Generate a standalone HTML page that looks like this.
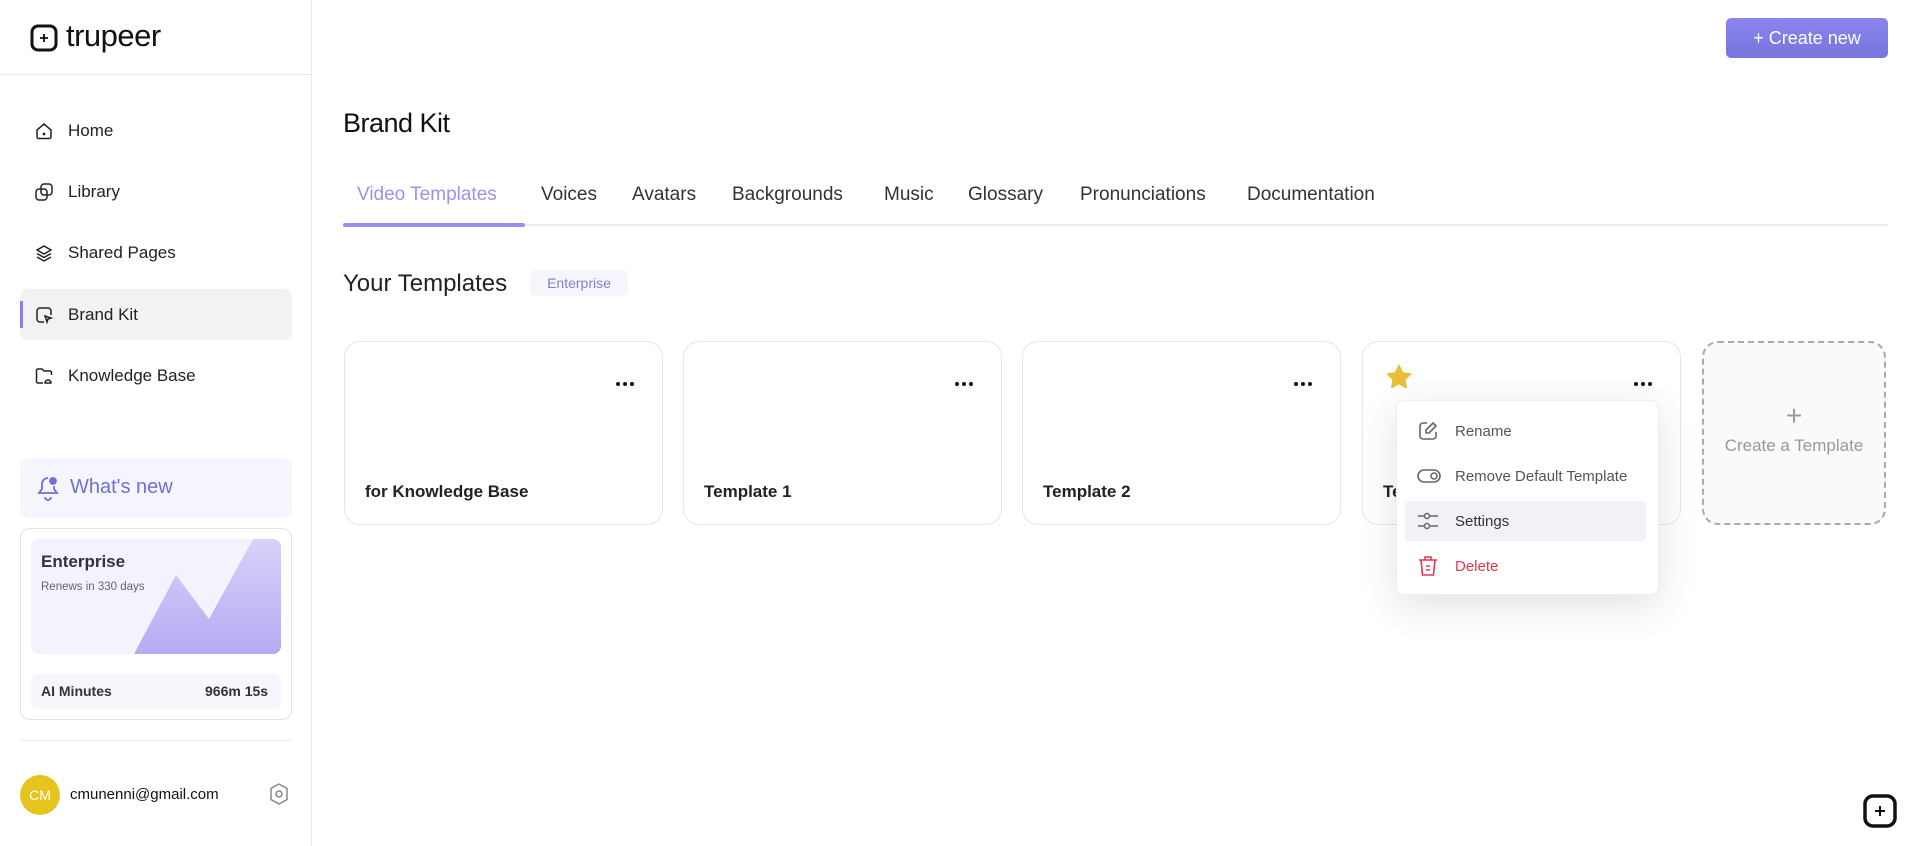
<!DOCTYPE html>
<html><head><style>
*{box-sizing:border-box;margin:0;padding:0}
body{width:1920px;height:846px;background:#fff;font-family:"Liberation Sans",sans-serif;position:relative;overflow:hidden;color:#1a1a1a}
.abs{position:absolute}
.side{left:0;top:0;width:312px;height:846px;border-right:1px solid #e8e8e8}
.nav{position:absolute;left:20px;width:272px;height:51px;display:flex;align-items:center;font-size:17px;color:#222}
.nav svg{position:absolute;left:15px}
.nav span{position:absolute;left:48px}
.tab{position:absolute;top:184px;font-size:19px;color:#333}
.card{position:absolute;top:341px;width:319px;height:184px;border:1.5px solid #e6e6e6;border-radius:16px;background:#fff}
.card .dots{position:absolute;right:28px;top:40px;width:18px;height:4px;display:flex;justify-content:space-between}
.card .dots i{width:4px;height:4px;border-radius:50%;background:#111;display:block}
.card .t{position:absolute;left:20px;top:140px;font-size:17px;font-weight:bold;color:#222}
.mi{position:absolute;left:8px;width:241px;height:40px;display:flex;align-items:center;font-size:15px;color:#555}
.mi svg{position:absolute;left:12px}
.mi span{position:absolute;left:50px}
</style></head><body>
<div class="abs side"></div>
<svg class="abs" style="left:30px;top:24px" width="28" height="28" viewBox="0 0 28 28"><rect x="2" y="2" width="24" height="24" rx="6" fill="none" stroke="#111" stroke-width="3"/><path d="M14 10v8M10 14h8" stroke="#111" stroke-width="1.8"/></svg>
<div class="abs" style="left:66px;top:18px;font-size:31px;color:#111;letter-spacing:-0.5px">trupeer</div>
<div class="abs" style="left:0;top:74px;width:312px;height:1px;background:#e5e5e5"></div>

<div class="nav" style="top:105px"><svg width="18" height="18" viewBox="0 0 18 18" fill="none" stroke="#222" stroke-width="1.5"><path d="M2 8l7-6 7 6v7a1.5 1.5 0 0 1-1.5 1.5h-11A1.5 1.5 0 0 1 2 15z"/><circle cx="9" cy="12" r=".6" fill="#222"/></svg><span>Home</span></div>
<div class="nav" style="top:166px"><svg width="18" height="18" viewBox="0 0 18 18" fill="none" stroke="#222" stroke-width="1.5"><rect x="1" y="6" width="11" height="11" rx="3"/><rect x="6" y="1" width="11" height="11" rx="3"/></svg><span>Library</span></div>
<div class="nav" style="top:227px"><svg width="18" height="18" viewBox="0 0 18 18" fill="none" stroke="#222" stroke-width="1.5"><path d="M9 2l7 4-7 4-7-4z"/><path d="M2 9.5l7 4 7-4M2 13l7 4 7-4"/></svg><span>Shared Pages</span></div>
<div class="nav" style="top:289px;background:#f2f2f2;border-radius:8px"><div class="abs" style="left:0;top:12px;width:3px;height:27px;background:#8a80ee"></div><svg width="18" height="18" viewBox="0 0 18 18" fill="none" stroke="#222" stroke-width="1.5"><path d="M16 9V5a3 3 0 0 0-3-3H5a3 3 0 0 0-3 3v8a3 3 0 0 0 3 3h4"/><path d="M10 10l6 2-3 1-1 3z"/></svg><span>Brand Kit</span></div>
<div class="nav" style="top:350px"><svg width="18" height="18" viewBox="0 0 18 18" fill="none" stroke="#222" stroke-width="1.5"><path d="M8 16H3a1.5 1.5 0 0 1-1.5-1.5v-11A1.5 1.5 0 0 1 3 2h4l2 2h6a1.5 1.5 0 0 1 1.5 1.5V8"/><path d="M10 16a3 3 0 0 1 6 0z"/></svg><span>Knowledge Base</span></div>

<div class="abs" style="left:20px;top:458px;width:272px;height:60px;background:#f5f5fe;border-radius:10px"></div>
<svg class="abs" style="left:36px;top:475px" width="24" height="26" viewBox="0 0 24 26" fill="none" stroke="#6a70d8" stroke-width="1.8"><path d="M12 3a6 6 0 0 0-6 6v5l-3 4h18l-3-4v-3"/><path d="M9 22a3 3 0 0 0 6 0"/><circle cx="17" cy="6" r="3" fill="#6a70d8"/></svg>
<div class="abs" style="left:70px;top:476px;font-size:20px;color:#6a70d8">What's new</div>

<div class="abs" style="left:20px;top:528px;width:272px;height:192px;border:1.5px solid #e2e2e2;border-radius:10px"></div>
<div class="abs" style="left:31px;top:539px;width:250px;height:115px;border-radius:8px;background:#f4f3fd;overflow:hidden"><svg width="250" height="115" viewBox="0 0 250 115"><defs><linearGradient id="g" x1="0" y1="0" x2="0" y2="1"><stop offset="0" stop-color="#d8d2fa"/><stop offset="1" stop-color="#b6aaf2"/></linearGradient></defs><path d="M103 115L145 36L178 80L222 0H250V115Z" fill="url(#g)"/></svg></div>
<div class="abs" style="left:41px;top:552px;font-size:17px;font-weight:bold;color:#333">Enterprise</div>
<div class="abs" style="left:41px;top:581px;font-size:11.5px;color:#666">Renews in 330 days</div>
<div class="abs" style="left:31px;top:674px;width:250px;height:35px;border-radius:6px;background:#f6f6fc"></div>
<div class="abs" style="left:41px;top:683px;font-size:14px;font-weight:bold;color:#333">AI Minutes</div>
<div class="abs" style="left:205px;top:683px;font-size:14px;font-weight:bold;color:#333">966m 15s</div>
<div class="abs" style="left:20px;top:740px;width:272px;height:1px;background:#eee"></div>
<div class="abs" style="left:20px;top:775px;width:40px;height:40px;border-radius:50%;background:#e5c41d;color:#fff;font-size:14px;display:flex;align-items:center;justify-content:center">CM</div>
<div class="abs" style="left:70px;top:786px;font-size:15px;color:#111">cmunenni@gmail.com</div>
<svg class="abs" style="left:268px;top:782px" width="22" height="24" viewBox="0 0 22 24" fill="none" stroke="#888" stroke-width="1.5"><path d="M11 2l8 4.5v11L11 22l-8-4.5v-11z"/><circle cx="11" cy="12" r="3"/></svg>

<div class="abs" style="left:1726px;top:18px;width:162px;height:40px;border-radius:5px;background:linear-gradient(#8a84ee,#7875df);color:#fff;font-size:18px;display:flex;align-items:center;justify-content:center">+&nbsp;Create new</div>
<div class="abs" style="left:343px;top:108px;font-size:27px;color:#111;letter-spacing:-0.5px">Brand Kit</div>
<div class="tab" style="left:357px;color:#9a93ef">Video Templates</div>
<div class="tab" style="left:541px">Voices</div>
<div class="tab" style="left:632px">Avatars</div>
<div class="tab" style="left:732px">Backgrounds</div>
<div class="tab" style="left:884px">Music</div>
<div class="tab" style="left:968px">Glossary</div>
<div class="tab" style="left:1080px">Pronunciations</div>
<div class="tab" style="left:1247px">Documentation</div>
<div class="abs" style="left:343px;top:224px;width:1545px;height:2px;background:#ececec"></div>
<div class="abs" style="left:343px;top:223px;width:182px;height:4px;background:#968ef0;border-radius:2px"></div>
<div class="abs" style="left:343px;top:270px;font-size:24px;color:#222">Your Templates</div>
<div class="abs" style="left:530px;top:270px;width:98px;height:26px;border-radius:6px;background:#f5f5fc;color:#8080cc;font-size:14px;display:flex;align-items:center;justify-content:center">Enterprise</div>

<div class="card" style="left:344px"><div class="dots"><i></i><i></i><i></i></div><div class="t">for Knowledge Base</div></div>
<div class="card" style="left:683px"><div class="dots"><i></i><i></i><i></i></div><div class="t">Template 1</div></div>
<div class="card" style="left:1022px"><div class="dots"><i></i><i></i><i></i></div><div class="t">Template 2</div></div>
<div class="card" style="left:1362px"><div class="dots"><i></i><i></i><i></i></div><div class="t">Te</div><svg class="abs" style="left:22px;top:22px" width="28" height="26" viewBox="0 0 24 23"><path d="M12 1.5l3.1 6.4 7 .9-5.1 4.9 1.3 7-6.3-3.4-6.3 3.4 1.3-7L1.9 8.8l7-.9z" fill="#e9bf35" stroke="#e9bf35" stroke-linejoin="round" stroke-width="1.5"/></svg></div>
<div class="abs" style="left:1702px;top:341px;width:184px;height:184px;border:2px dashed #aaa;border-radius:16px;background:#fafafa"></div>
<div class="abs" style="left:1702px;top:400px;width:184px;text-align:center;font-size:28px;color:#999;font-weight:300">+</div>
<div class="abs" style="left:1702px;top:436px;width:184px;text-align:center;font-size:17px;color:#999">Create a Template</div>

<div class="abs" style="left:1396px;top:400px;width:263px;height:195px;background:#fff;border:1px solid #eee;border-radius:8px;box-shadow:0 10px 40px rgba(0,0,0,.12)">
<div class="mi" style="top:10px"><svg width="22" height="22" viewBox="0 0 22 22" fill="none" stroke="#666" stroke-width="1.6"><path d="M10 3H6a3 3 0 0 0-3 3v10a3 3 0 0 0 3 3h10a3 3 0 0 0 3-3v-4"/><path d="M16 3l3 3-7 7H9v-3z"/></svg><span>Rename</span></div>
<div class="mi" style="top:55px"><svg width="24" height="22" viewBox="0 0 24 22" fill="none" stroke="#666" stroke-width="1.6"><rect x="1" y="5" width="22" height="12" rx="6"/><circle cx="17" cy="11" r="3"/></svg><span>Remove Default Template</span></div>
<div class="mi" style="top:100px;background:#f0f2f6;border-radius:4px;color:#333"><svg width="22" height="22" viewBox="0 0 22 22" fill="none" stroke="#666" stroke-width="1.5"><circle cx="10" cy="6" r="2.5"/><circle cx="10" cy="16" r="2.5"/><path d="M1 6h6M13 6h8M1 16h6M13 16h8"/></svg><span>Settings</span></div>
<div class="mi" style="top:145px;color:#e0384f"><svg width="22" height="24" viewBox="0 0 22 24" fill="none" stroke="#e0384f" stroke-width="1.6"><path d="M2 6h18M8 6V3h6v3M4 6l1.5 15h11L18 6M9 12h4M9 16h4"/></svg><span>Delete</span></div>
</div>
<svg class="abs" style="left:1862px;top:793px" width="36" height="36" viewBox="0 0 36 36"><rect x="3" y="3" width="30" height="30" rx="8" fill="#fff" stroke="#111" stroke-width="3.5"/><path d="M18 13v10M13 18h10" stroke="#111" stroke-width="2"/></svg>
</body></html>
